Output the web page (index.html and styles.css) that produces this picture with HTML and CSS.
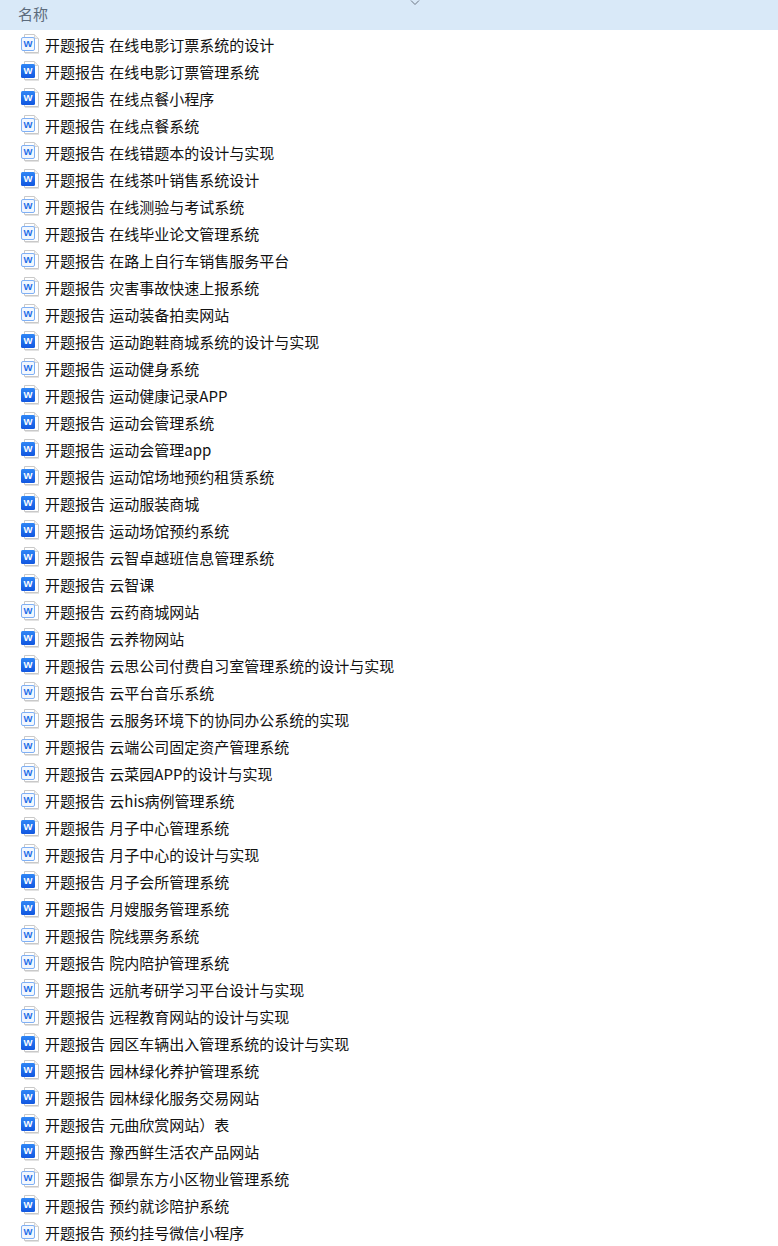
FILE: index.html
```html
<!DOCTYPE html>
<html lang="zh-CN">
<head>
    <meta charset="UTF-8">
    <title>文件列表</title>
    <link rel="stylesheet" href="styles.css">
</head>
<body>
    <svg class="icon-defs" aria-hidden="true">
        <defs>
            <linearGradient id="badgeFill" x1="0" y1="0" x2="0" y2="1">
                <stop offset="0" stop-color="#2f86f6"/>
                <stop offset="1" stop-color="#1257e0"/>
            </linearGradient>
            <symbol id="paper" viewBox="0 0 20 21">
                <path d="M4.5 1.5H14.5L18.5 5.5V19.5H4.5Z" fill="#fff" stroke="#c9c9c9"/>
                <path d="M14.5 1.5V5.5H18.5" fill="#efefef" stroke="#d6d6d6"/>
                <path d="M5 20.5H19" stroke="#e2e2e2"/>
            </symbol>
            <symbol id="word-light" viewBox="0 0 20 21">
                <use href="#paper"/>
                <rect x="1.5" y="4.5" width="13" height="13" rx="1.5" fill="#f2f7fe" stroke="#7fb0f5"/>
                <text x="8" y="14.3" class="badge-letter badge-letter-light">W</text>
            </symbol>
            <symbol id="word-dark" viewBox="0 0 20 21">
                <use href="#paper"/>
                <rect x="1" y="4" width="14" height="14" rx="1.5" fill="url(#badgeFill)"/>
                <text x="8" y="14.3" class="badge-letter badge-letter-dark">W</text>
            </symbol>
        </defs>
    </svg>

    <div class="header">
        <span class="header-name">名称</span>
        <svg class="sort-arrow" width="10" height="6" viewBox="0 0 10 6"><path d="M1 0.5L5 4.5L9 0.5" fill="none" stroke="#6d7683"/></svg>
    </div>

    <ul class="file-list">
        <li class="file-row"><svg class="file-icon"><use href="#word-light"/></svg><span>开题报告 在线电影订票系统的设计</span></li>
        <li class="file-row"><svg class="file-icon"><use href="#word-dark"/></svg><span>开题报告 在线电影订票管理系统</span></li>
        <li class="file-row"><svg class="file-icon"><use href="#word-dark"/></svg><span>开题报告 在线点餐小程序</span></li>
        <li class="file-row"><svg class="file-icon"><use href="#word-light"/></svg><span>开题报告 在线点餐系统</span></li>
        <li class="file-row"><svg class="file-icon"><use href="#word-light"/></svg><span>开题报告 在线错题本的设计与实现</span></li>
        <li class="file-row"><svg class="file-icon"><use href="#word-dark"/></svg><span>开题报告 在线茶叶销售系统设计</span></li>
        <li class="file-row"><svg class="file-icon"><use href="#word-light"/></svg><span>开题报告 在线测验与考试系统</span></li>
        <li class="file-row"><svg class="file-icon"><use href="#word-light"/></svg><span>开题报告 在线毕业论文管理系统</span></li>
        <li class="file-row"><svg class="file-icon"><use href="#word-light"/></svg><span>开题报告 在路上自行车销售服务平台</span></li>
        <li class="file-row"><svg class="file-icon"><use href="#word-light"/></svg><span>开题报告 灾害事故快速上报系统</span></li>
        <li class="file-row"><svg class="file-icon"><use href="#word-light"/></svg><span>开题报告 运动装备拍卖网站</span></li>
        <li class="file-row"><svg class="file-icon"><use href="#word-dark"/></svg><span>开题报告 运动跑鞋商城系统的设计与实现</span></li>
        <li class="file-row"><svg class="file-icon"><use href="#word-light"/></svg><span>开题报告 运动健身系统</span></li>
        <li class="file-row"><svg class="file-icon"><use href="#word-dark"/></svg><span>开题报告 运动健康记录APP</span></li>
        <li class="file-row"><svg class="file-icon"><use href="#word-dark"/></svg><span>开题报告 运动会管理系统</span></li>
        <li class="file-row"><svg class="file-icon"><use href="#word-dark"/></svg><span>开题报告 运动会管理app</span></li>
        <li class="file-row"><svg class="file-icon"><use href="#word-dark"/></svg><span>开题报告 运动馆场地预约租赁系统</span></li>
        <li class="file-row"><svg class="file-icon"><use href="#word-dark"/></svg><span>开题报告 运动服装商城</span></li>
        <li class="file-row"><svg class="file-icon"><use href="#word-dark"/></svg><span>开题报告 运动场馆预约系统</span></li>
        <li class="file-row"><svg class="file-icon"><use href="#word-dark"/></svg><span>开题报告 云智卓越班信息管理系统</span></li>
        <li class="file-row"><svg class="file-icon"><use href="#word-dark"/></svg><span>开题报告 云智课</span></li>
        <li class="file-row"><svg class="file-icon"><use href="#word-light"/></svg><span>开题报告 云药商城网站</span></li>
        <li class="file-row"><svg class="file-icon"><use href="#word-dark"/></svg><span>开题报告 云养物网站</span></li>
        <li class="file-row"><svg class="file-icon"><use href="#word-dark"/></svg><span>开题报告 云思公司付费自习室管理系统的设计与实现</span></li>
        <li class="file-row"><svg class="file-icon"><use href="#word-light"/></svg><span>开题报告 云平台音乐系统</span></li>
        <li class="file-row"><svg class="file-icon"><use href="#word-light"/></svg><span>开题报告 云服务环境下的协同办公系统的实现</span></li>
        <li class="file-row"><svg class="file-icon"><use href="#word-light"/></svg><span>开题报告 云端公司固定资产管理系统</span></li>
        <li class="file-row"><svg class="file-icon"><use href="#word-light"/></svg><span>开题报告 云菜园APP的设计与实现</span></li>
        <li class="file-row"><svg class="file-icon"><use href="#word-light"/></svg><span>开题报告 云his病例管理系统</span></li>
        <li class="file-row"><svg class="file-icon"><use href="#word-dark"/></svg><span>开题报告 月子中心管理系统</span></li>
        <li class="file-row"><svg class="file-icon"><use href="#word-light"/></svg><span>开题报告 月子中心的设计与实现</span></li>
        <li class="file-row"><svg class="file-icon"><use href="#word-dark"/></svg><span>开题报告 月子会所管理系统</span></li>
        <li class="file-row"><svg class="file-icon"><use href="#word-dark"/></svg><span>开题报告 月嫂服务管理系统</span></li>
        <li class="file-row"><svg class="file-icon"><use href="#word-light"/></svg><span>开题报告 院线票务系统</span></li>
        <li class="file-row"><svg class="file-icon"><use href="#word-light"/></svg><span>开题报告 院内陪护管理系统</span></li>
        <li class="file-row"><svg class="file-icon"><use href="#word-light"/></svg><span>开题报告 远航考研学习平台设计与实现</span></li>
        <li class="file-row"><svg class="file-icon"><use href="#word-light"/></svg><span>开题报告 远程教育网站的设计与实现</span></li>
        <li class="file-row"><svg class="file-icon"><use href="#word-dark"/></svg><span>开题报告 园区车辆出入管理系统的设计与实现</span></li>
        <li class="file-row"><svg class="file-icon"><use href="#word-dark"/></svg><span>开题报告 园林绿化养护管理系统</span></li>
        <li class="file-row"><svg class="file-icon"><use href="#word-dark"/></svg><span>开题报告 园林绿化服务交易网站</span></li>
        <li class="file-row"><svg class="file-icon"><use href="#word-dark"/></svg><span>开题报告 元曲欣赏网站）表</span></li>
        <li class="file-row"><svg class="file-icon"><use href="#word-dark"/></svg><span>开题报告 豫西鲜生活农产品网站</span></li>
        <li class="file-row"><svg class="file-icon"><use href="#word-light"/></svg><span>开题报告 御景东方小区物业管理系统</span></li>
        <li class="file-row"><svg class="file-icon"><use href="#word-dark"/></svg><span>开题报告 预约就诊陪护系统</span></li>
        <li class="file-row"><svg class="file-icon"><use href="#word-light"/></svg><span>开题报告 预约挂号微信小程序</span></li>
    </ul>
</body>
</html>
```

FILE: styles.css
```css
html, body {
    margin: 0;
    height: 1246px;
    overflow: hidden;
}

body {
    background: #fff;
    color: #111;
    font-family: "Noto Sans CJK SC", "Liberation Sans", sans-serif;
    font-size: 15px;
}

.icon-defs {
    display: block;
    width: 0;
    height: 0;
}

.badge-letter {
    font-family: "Liberation Sans", sans-serif;
    font-size: 9.5px;
    font-weight: bold;
    text-anchor: middle;
}

.badge-letter-light {
    fill: #1f6fe8;
}

.badge-letter-dark {
    fill: #fff;
}

/* column header */
.header {
    position: relative;
    display: flex;
    align-items: center;
    height: 27px;
    padding: 0 0 3px 18px;
    background: #d9e9f8;
}

.header-name {
    color: #5c6b7c;
}

.sort-arrow {
    position: absolute;
    left: 410px;
    top: 0;
}

/* file rows */
.file-list {
    list-style: none;
    margin: 0;
    padding: 1px 0 0 20px;
}

.file-row {
    display: flex;
    align-items: center;
    gap: 5px;
    height: 27px;
    white-space: nowrap;
    word-spacing: 1px;
}

.file-icon {
    flex: none;
    width: 20px;
    height: 21px;
    margin-bottom: 2px;
}
```
